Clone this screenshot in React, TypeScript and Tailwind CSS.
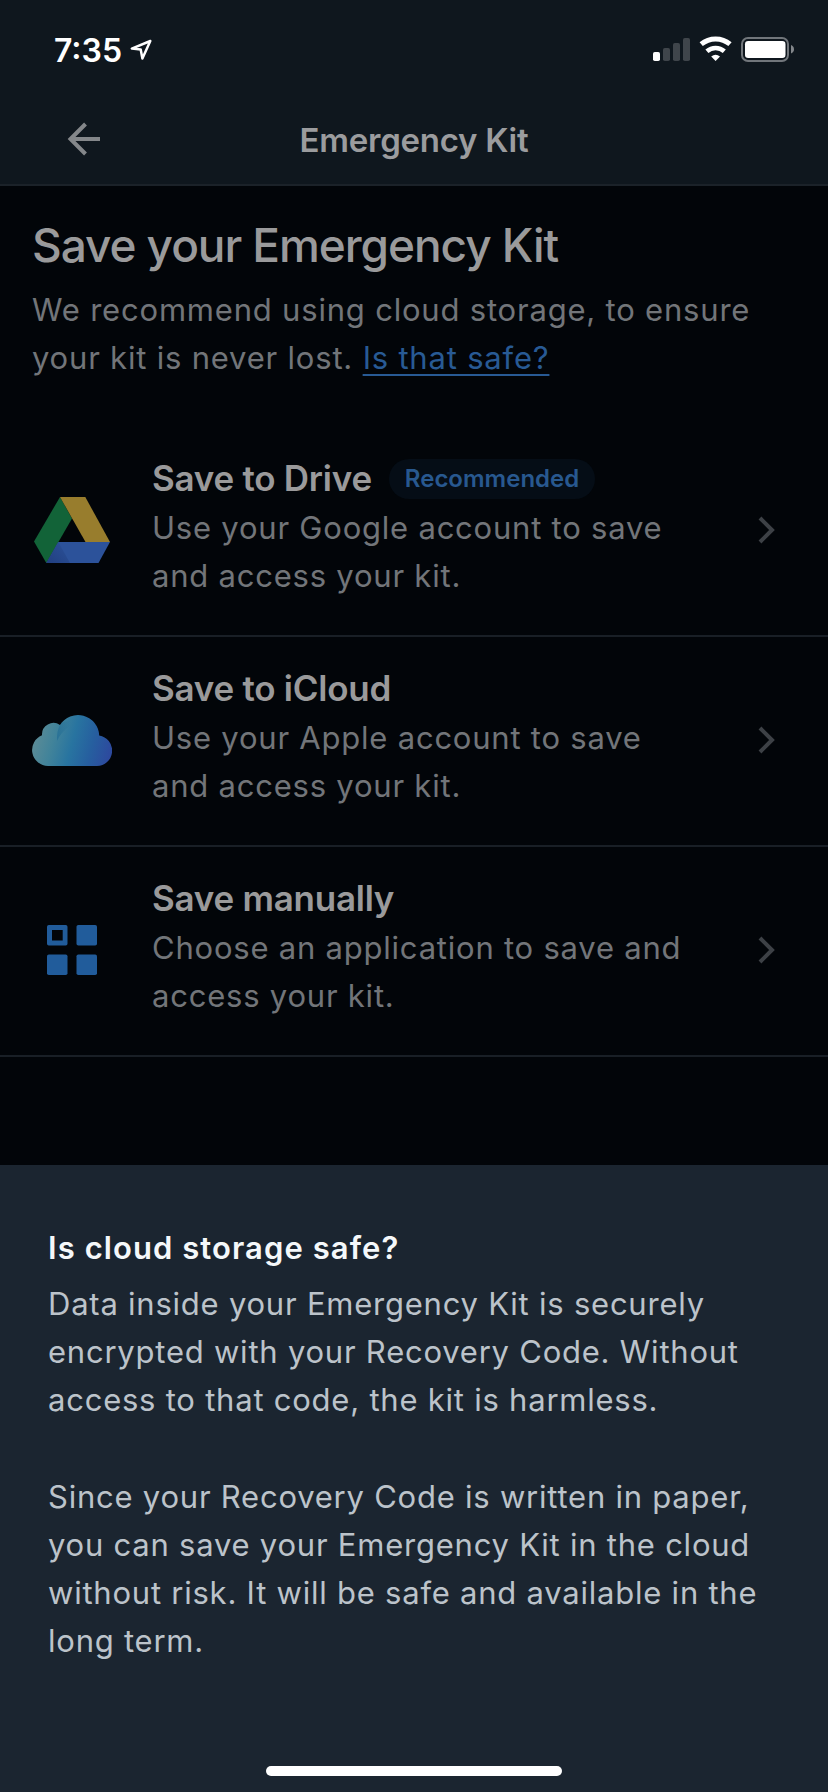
import type { ReactNode } from "react";

function StatusBar() {
  return (
    <div className="flex h-[92px] items-start pl-[54px] pr-[33px] pt-[36px] text-white">
      <span className="mt-px w-[76px] text-[32px] font-semibold leading-[27px] tracking-[0px]">7:35</span>
      <svg className="mt-[2px]" width="24" height="24" viewBox="0 0 24 24" fill="none">
        <path d="M20.3 3 L1.8 10.6 L10.7 11.6 L12.4 20.6 Z" stroke="currentColor" strokeWidth="2.5" strokeLinejoin="round" />
      </svg>
      <svg className="ml-auto" width="142" height="28" viewBox="0 0 142 28" fill="none">
        <rect x="0" y="16" width="7" height="9" rx="1.8" fill="#fff" />
        <rect x="10" y="12" width="7" height="13" rx="1.8" fill="#3f454b" />
        <rect x="20" y="7" width="7" height="18" rx="1.8" fill="#3f454b" />
        <rect x="30" y="2" width="7" height="23" rx="1.8" fill="#3f454b" />
        <path d="M48.2 8.2 A22.2 22.2 0 0 1 77 8.2" stroke="#fff" strokeWidth="5" />
        <path d="M53.9 15.2 A13.2 13.2 0 0 1 71.3 15.2" stroke="#fff" strokeWidth="4.6" />
        <path d="M58.2 20.4 Q62.6 17 67 20.4 L62.6 25 Z" fill="#fff" />
        <rect x="89" y="2" width="46" height="23" rx="6" stroke="#71767b" strokeWidth="2" />
        <rect x="92" y="5" width="40.5" height="17" rx="3.2" fill="#fff" />
        <path d="M138 9 Q141 10.2 141 13.2 Q141 16.2 138 17.4 Z" fill="#83878b" />
      </svg>
    </div>
  );
}

function Header() {
  return (
    <div className="grid h-[92px] grid-cols-[1fr_auto_1fr] items-center pt-[2px]">
      <svg className="ml-[66px]" width="36" height="36" viewBox="0 0 36 36" fill="none">
        <path d="M34 18 H4.5 M19.5 3 L4.5 18 L19.5 33" stroke="#84878a" strokeWidth="4" />
      </svg>
      <h1 className="pt-[2px] text-[33px] font-semibold leading-10 tracking-[-0.25px] text-[#9b9c9e]">Emergency Kit</h1>
    </div>
  );
}

function DriveIcon() {
  return (
    <svg width="80" height="70" viewBox="0 0 80 70">
      <defs>
        <linearGradient id="fold" x1="0" y1="1" x2="1" y2="0">
          <stop offset="0" stopColor="#213f80" />
          <stop offset="1" stopColor="#2c529a" />
        </linearGradient>
      </defs>
      <path d="M28 2 L40 23.5 L14.3 68 L2 46.5 Z" fill="#126338" />
      <path d="M28 2 H53.3 L78 47 H53.5 Z" fill="#987d2d" />
      <path d="M26.3 47 H78 L66.5 68 H14.3 Z" fill="#2c529a" />
      <path d="M26.3 47 L38 68 H14.3 Z" fill="url(#fold)" />
    </svg>
  );
}

function CloudIcon() {
  return (
    <svg width="80" height="54" viewBox="0 0 80 54">
      <defs>
        <linearGradient id="sky" gradientUnits="userSpaceOnUse" x1="2" y1="20" x2="78" y2="40">
          <stop offset="0" stopColor="#5d8c96" />
          <stop offset="0.26" stopColor="#41839a" />
          <stop offset="0.5" stopColor="#2874a0" />
          <stop offset="0.75" stopColor="#265f9f" />
          <stop offset="1" stopColor="#2d4a9e" />
        </linearGradient>
        <linearGradient id="crease" gradientUnits="userSpaceOnUse" x1="24" y1="0" x2="38" y2="0">
          <stop offset="0" stopColor="#1f6a94" stopOpacity="0.7" />
          <stop offset="1" stopColor="#1f6a94" stopOpacity="0" />
        </linearGradient>
      </defs>
      <path
        d="M16 53 A16 16 0 0 1 10 22.2 A11.5 11.5 0 0 1 28 12 A21.2 21.2 0 0 1 67.2 22.4 A15.4 15.4 0 0 1 65 53 Z"
        fill="url(#sky)"
      />
      <path d="M28 12 Q24.5 18 25 28 Q29 19 38 13 V8 L30 9 Z" fill="url(#crease)" />
    </svg>
  );
}

function AppsIcon() {
  return (
    <svg width="50" height="50" viewBox="0 0 50 50" fill="#215c9b">
      <path
        fillRule="evenodd"
        d="M1.8 0 H18.7 Q20.5 0 20.5 1.8 V18.7 Q20.5 20.5 18.7 20.5 H1.8 Q0 20.5 0 18.7 V1.8 Q0 0 1.8 0 Z M5 5 V15.5 H15.7 V5 Z"
      />
      <rect x="29.5" y="0" width="20.5" height="20.5" rx="1.8" />
      <rect x="0" y="29.5" width="20.5" height="20.5" rx="1.8" />
      <rect x="29.5" y="29.5" width="20.5" height="20.5" rx="1.8" />
    </svg>
  );
}

type OptionProps = { icon: ReactNode; title: string; badge?: string; lines: string[] };

function Option({ icon, title, badge, lines }: OptionProps) {
  return (
    <li className="flex h-[210px] items-start border-b-2 border-[#191f26] pl-8 pr-[51px] pt-8">
      <div className="flex h-[142px] w-20 shrink-0 items-center justify-center">{icon}</div>
      <div className="ml-[40px] flex-1">
        <div className="flex h-10 items-center">
          <h3 className="pb-[2px] text-[35px] font-semibold leading-[38px] tracking-[-0.25px] text-[#9a9a9b]">{title}</h3>
          {badge && (
            <span className="ml-[17px] flex h-10 items-center rounded-full bg-[#050d16] px-4 text-[24px] font-semibold tracking-[0px] text-[#28588f]">
              {badge}
            </span>
          )}
        </div>
        <p className="mt-[5px] whitespace-nowrap text-[31px] leading-[48px] tracking-[0.78px] text-[#727579]">
          {lines[0]}
          <br />
          {lines[1]}
        </p>
      </div>
      <svg className="mt-[57px]" width="20" height="30" viewBox="0 0 20 30" fill="none">
        <path d="M3 2 L15 14 L3 26" stroke="#3d4146" strokeWidth="4" />
      </svg>
    </li>
  );
}

export default function App() {
  return (
    <div className="flex h-[1792px] w-[828px] flex-col overflow-hidden bg-[#020509] font-['Inter',sans-serif]">
      <header className="h-[186px] shrink-0 border-b-2 border-[#1b2229] bg-[#0f171e]">
        <StatusBar />
        <Header />
      </header>

      <main className="h-[979px] shrink-0">
        <section className="h-[241px] pl-8 pt-[31px]">
          <h2 className="text-[46px] font-medium leading-[56px] tracking-[-1.07px] text-[#9a9a9b]">Save your Emergency Kit</h2>
          <p className="mt-[13px] whitespace-nowrap text-[31px] leading-[48px] tracking-[0.8px] text-[#727579]">
            We recommend using cloud storage, to ensure
            <br />
            your kit is never lost.{" "}
            <a className="text-[#285a94] underline decoration-2 underline-offset-[5px] [text-decoration-skip-ink:none]">Is that safe?</a>
          </p>
        </section>
        <ul>
          <Option
            icon={<DriveIcon />}
            title="Save to Drive"
            badge="Recommended"
            lines={["Use your Google account to save", "and access your kit."]}
          />
          <Option icon={<CloudIcon />} title="Save to iCloud" lines={["Use your Apple account to save", "and access your kit."]} />
          <Option icon={<AppsIcon />} title="Save manually" lines={["Choose an application to save and", "access your kit."]} />
        </ul>
      </main>

      <section className="flex flex-1 flex-col bg-[#1b2530] pl-12 pt-[59px]">
        <h2 className="text-[31px] font-semibold leading-[48px] tracking-[1.07px] text-[#f5f8fa]">Is cloud storage safe?</h2>
        <div className="mt-[8px] whitespace-nowrap text-[31px] leading-[48.2px] tracking-[0.77px] text-[#bcc3ca]">
          <p>
            Data inside your Emergency Kit is securely
            <br />
            encrypted with your Recovery Code. Without
            <br />
            access to that code, the kit is harmless.
          </p>
          <p className="mt-12">
            Since your Recovery Code is written in paper,
            <br />
            you can save your Emergency Kit in the cloud
            <br />
            without risk. It will be safe and available in the
            <br />
            long term.
          </p>
        </div>
        <div className="mb-4 ml-[218px] mt-auto h-[10px] w-[296px] rounded-full bg-white" />
      </section>
    </div>
  );
}
